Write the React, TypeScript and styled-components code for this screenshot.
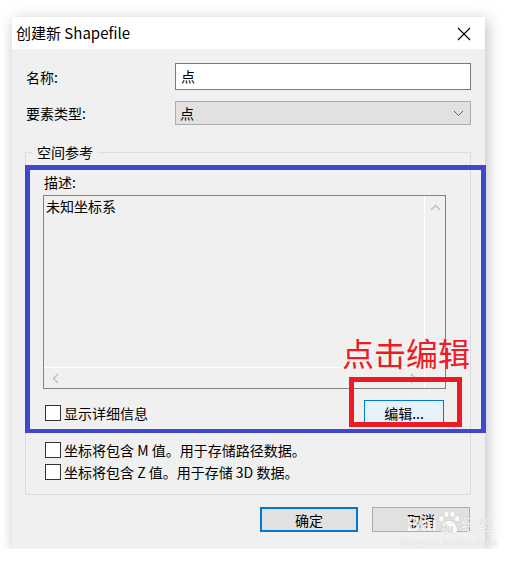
import React, { FC } from 'react';
import styled, { createGlobalStyle } from 'styled-components';

const GlobalStyle = createGlobalStyle`
  html, body {
    margin: 0;
    background: #ffffff;
  }
  body {
    font-family: "Noto Sans CJK SC", "Noto Sans", "Liberation Sans", sans-serif;
    font-size: 14px;
    color: #000;
  }
`;

const ChevronUp: FC = () => (
  <svg width="11" height="7" viewBox="0 0 11 7">
    <path d="M1 6 L5.5 1.5 L10 6" fill="none" stroke="#c2c2c2" strokeWidth="1.6" />
  </svg>
);

const ChevronLeft: FC = () => (
  <svg width="7" height="11" viewBox="0 0 7 11">
    <path d="M6 1 L1.5 5.5 L6 10" fill="none" stroke="#c2c2c2" strokeWidth="1.6" />
  </svg>
);

const ChevronRight: FC = () => (
  <svg width="7" height="11" viewBox="0 0 7 11">
    <path d="M1 1 L5.5 5.5 L1 10" fill="none" stroke="#c2c2c2" strokeWidth="1.6" />
  </svg>
);

const ChevronDown: FC = () => (
  <svg width="11" height="7" viewBox="0 0 11 7">
    <path d="M1 1 L5.5 5.5 L10 1" fill="none" stroke="#606060" strokeWidth="1" />
  </svg>
);

const CloseIcon: FC = () => (
  <svg width="14" height="14" viewBox="0 0 14 14">
    <path d="M1 1 L13 13 M13 1 L1 13" stroke="#000" strokeWidth="1.1" />
  </svg>
);

const Paw: FC = () => (
  <svg width="22" height="24" viewBox="0 0 26 28">
    <g fill="rgba(255,255,255,0.9)" stroke="rgba(0,0,0,0.12)" strokeWidth="0.8">
      <ellipse cx="4" cy="9" rx="3" ry="3.6" />
      <ellipse cx="10" cy="3.8" rx="3" ry="3.6" />
      <ellipse cx="17" cy="3.8" rx="3" ry="3.6" />
      <ellipse cx="22.5" cy="9" rx="3" ry="3.6" />
      <path d="M13 11 C8 11 3 18 3 22 C3 27 9 27 13 25 C17 27 23 27 23 22 C23 18 18 11 13 11 Z" />
    </g>
  </svg>
);

type CheckProps = {
  label: React.ReactNode;
};

const Check: FC<CheckProps> = ({ label }) => (
  <CheckRow>
    <CheckBox />
    <span>{label}</span>
  </CheckRow>
);

const App: FC = () => {
  return (
    <>
      <GlobalStyle />
      <Page>
        <Dialog>
          <TitleBar>
            <Title>创建新 Shapefile</Title>
            <CloseButton>
              <CloseIcon />
            </CloseButton>
          </TitleBar>
          <Body>
            <FormGrid>
              <Label>名称:</Label>
              <TextInput>点</TextInput>
              <Label>要素类型:</Label>
              <Select>
                <span>点</span>
                <ChevronDown />
              </Select>
            </FormGrid>

            <GroupBox>
              <Legend>空间参考</Legend>
              <SubLabel>描述:</SubLabel>
              <ListBox>
                <ListText>未知坐标系</ListText>
                <VScroll>
                  <ChevronUp />
                </VScroll>
                <HScroll>
                  <ChevronLeft />
                  <ChevronRight />
                </HScroll>
                <Corner />
              </ListBox>
              <DetailRow>
                <Check label="显示详细信息" />
                <EditButton>编辑...</EditButton>
              </DetailRow>
              <OptionList>
                <Check label="坐标将包含 M 值。用于存储路径数据。" />
                <Check label="坐标将包含 Z 值。用于存储 3D 数据。" />
              </OptionList>
            </GroupBox>

            <ButtonRow>
              <DialogButton primary>确定</DialogButton>
              <DialogButton>取消</DialogButton>
            </ButtonRow>
          </Body>

          <BlueMark />
          <RedText>点击编辑</RedText>
          <RedMark />
          <Watermark>
            <WmTop>
              <WmBrand>Bai</WmBrand>
              <WmPaw>
                <Paw />
                <WmDu>du</WmDu>
              </WmPaw>
              <WmCn>经验</WmCn>
            </WmTop>
            <WmUrl>jingyan.baidu.com</WmUrl>
          </Watermark>
        </Dialog>
      </Page>
    </>
  );
};

const Page = styled.div`
  padding: 17px 0 0 12px;
`;

const Dialog = styled.div`
  position: relative;
  width: 473px;
  height: 532px;
  background: #f0f0f0;
  box-shadow: 2px 3px 14px rgba(0, 0, 0, 0.26);
  display: flex;
  flex-direction: column;
`;

const TitleBar = styled.div`
  height: 32px;
  background: #ffffff;
  display: flex;
  align-items: center;
  justify-content: space-between;
  padding: 0 14px 0 4px;
`;

const Title = styled.div`
  font-size: 15px;
  line-height: 20px;
`;

const CloseButton = styled.div`
  display: flex;
  align-items: center;
  margin-top: 1px;
`;

const Body = styled.div`
  flex: 1;
  padding: 14px 14px 0 13px;
  display: flex;
  flex-direction: column;
`;

const FormGrid = styled.div`
  display: grid;
  grid-template-columns: 150px 1fr;
  row-gap: 11px;
  align-items: center;
`;

const Label = styled.div`
  padding-left: 1px;
  line-height: 20px;
`;

const TextInput = styled.div`
  height: 27px;
  box-sizing: border-box;
  background: #ffffff;
  border: 1px solid #7a7a7a;
  padding: 0 5px;
  line-height: 24px;
`;

const Select = styled.div`
  height: 24px;
  box-sizing: border-box;
  background: #e1e1e1;
  border: 1px solid #adadad;
  padding: 0 6px 0 4px;
  display: flex;
  align-items: center;
  justify-content: space-between;
  line-height: 20px;
`;

const GroupBox = styled.fieldset`
  margin: 17px 0 0;
  padding: 0 24px 12px 17px;
  border: 1px solid #dcdcdc;
  min-width: 0;
`;

const Legend = styled.legend`
  margin-left: -11px;
  padding: 0 5px;
  line-height: 20px;
`;

const SubLabel = styled.div`
  margin-top: 10px;
  padding-left: 1px;
  line-height: 20px;
`;

const ListBox = styled.div`
  margin-top: 3px;
  height: 194px;
  box-sizing: border-box;
  border: 1px solid #828282;
  display: grid;
  grid-template-columns: 1fr 21px;
  grid-template-rows: 1fr 21px;
`;

const ListText = styled.div`
  padding: 0 2px;
  line-height: 20px;
`;

const VScroll = styled.div`
  border-left: 1px solid #ffffff;
  display: flex;
  justify-content: center;
  padding-top: 8px;
`;

const HScroll = styled.div`
  border-top: 1px solid #ffffff;
  display: flex;
  align-items: center;
  justify-content: space-between;
  padding: 0 7px 0 8px;
`;

const Corner = styled.div`
  border-left: 1px solid #ffffff;
`;

const DetailRow = styled.div`
  margin-top: 11px;
  display: flex;
  align-items: center;
  justify-content: space-between;
  padding-right: 2px;
`;

const CheckRow = styled.div`
  display: flex;
  align-items: center;
  gap: 3px;
  line-height: 20px;
  padding-left: 2px;
`;

const CheckBox = styled.div`
  width: 16px;
  height: 16px;
  box-sizing: border-box;
  border: 1px solid #333333;
  background: #ffffff;
`;

const EditButton = styled.div`
  width: 80px;
  height: 25px;
  box-sizing: border-box;
  border: 1px solid #0078d7;
  background: #e5f1fb;
  display: flex;
  align-items: center;
  justify-content: center;
`;

const OptionList = styled.div`
  margin-top: 15px;
  display: flex;
  flex-direction: column;
  gap: 2px;
`;

const ButtonRow = styled.div`
  margin-top: 12px;
  display: flex;
  justify-content: flex-end;
  gap: 14px;
  padding-right: 1px;
`;

const DialogButton = styled.div<{ primary?: boolean }>`
  width: 98px;
  height: 25px;
  box-sizing: border-box;
  background: #e1e1e1;
  border: ${({ primary }) => (primary ? '2px solid #0078d7' : '1px solid #adadad')};
  display: flex;
  align-items: center;
  justify-content: center;
`;

/* screenshot annotations drawn over the dialog */
const BlueMark = styled.div`
  position: absolute;
  left: 13px;
  top: 148px;
  width: 461px;
  height: 268px;
  box-sizing: border-box;
  border: 5px solid #3f48cc;
  border-bottom-width: 4px;
  pointer-events: none;
`;

const RedMark = styled.div`
  position: absolute;
  left: 337px;
  top: 360px;
  width: 113px;
  height: 50px;
  box-sizing: border-box;
  border: 5px solid #ed1c24;
  pointer-events: none;
`;

const RedText = styled.div`
  position: absolute;
  left: 330px;
  top: 317px;
  font-size: 32px;
  line-height: 36px;
  color: #ed1c24;
  white-space: nowrap;
`;

const Watermark = styled.div`
  position: absolute;
  left: 389px;
  top: 494px;
  display: flex;
  flex-direction: column;
  align-items: center;
  color: rgba(255, 255, 255, 0.9);
  text-shadow: 0 0 1px rgba(0, 0, 0, 0.22);
  pointer-events: none;
`;

const WmTop = styled.div`
  display: flex;
  align-items: flex-end;
`;

const WmBrand = styled.span`
  font-family: "Liberation Sans", sans-serif;
  font-weight: bold;
  font-size: 20px;
  line-height: 22px;
`;

const WmPaw = styled.span`
  position: relative;
  display: flex;
  margin: 0 1px;
`;

const WmDu = styled.span`
  position: absolute;
  left: 3px;
  bottom: 1px;
  font-family: "Liberation Sans", sans-serif;
  font-weight: bold;
  font-size: 10px;
  color: rgba(225, 225, 225, 0.95);
`;

const WmCn = styled.span`
  font-size: 16px;
  line-height: 22px;
`;

const WmUrl = styled.span`
  font-family: "Liberation Sans", sans-serif;
  font-size: 11px;
  line-height: 14px;
  letter-spacing: 0.5px;
`;

export default App;
